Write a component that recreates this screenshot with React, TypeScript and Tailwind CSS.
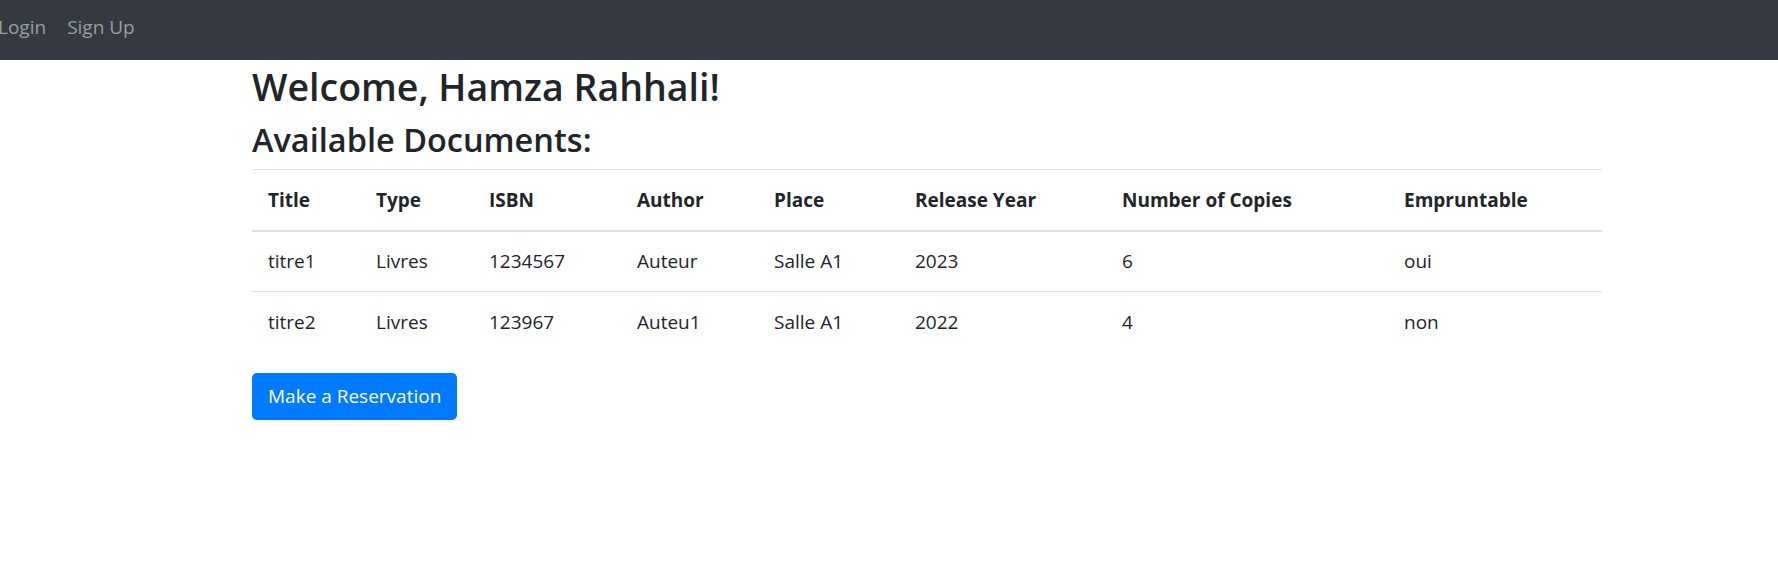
import React from 'react';

const docs = [
  { title: 'titre1', type: 'Livres', isbn: '1234567', author: 'Auteur', place: 'Salle A1', year: '2023', copies: '6', emp: 'oui' },
  { title: 'titre2', type: 'Livres', isbn: '123967', author: 'Auteu1', place: 'Salle A1', year: '2022', copies: '4', emp: 'non' },
];

const cols = ['w-[108px]', 'w-[113px]', 'w-[148px]', 'w-[137px]', 'w-[141px]', 'w-[207px]', 'w-[282px]', ''];

export default function App() {
  return (
    <div className="min-h-[572px] bg-white text-[#212529] font-['Open_Sans',sans-serif]">
      <nav className="h-[60px] bg-[#343a40] flex items-center">
        <div className="flex items-center gap-[21px] -ml-[2px] text-[19px] text-[#9a9da0] -mt-[6px]">
          <a href="#">Login</a>
          <a href="#">Sign Up</a>
        </div>
      </nav>

      <main className="ml-[252px] w-[1350px]">
        <h1 className="text-[37.5px] leading-[48px] font-semibold mt-[3px]">Welcome, Hamza Rahhali!</h1>
        <h2 className="text-[32.5px] leading-[40px] font-semibold mt-[9px]">Available Documents:</h2>

        <table className="w-full mt-[9px] text-[19px] border-collapse">
          <thead>
            <tr className="border-t border-[#dee2e6] border-b-2">
              {['Title', 'Type', 'ISBN', 'Author', 'Place', 'Release Year', 'Number of Copies', 'Empruntable'].map((h, i) => (
                <th key={h} className={`${cols[i]} text-left font-bold px-[16px] h-[61px] leading-[30px]`}>{h}</th>
              ))}
            </tr>
          </thead>
          <tbody>
            {docs.map((d, r) => (
              <tr key={d.title} className={r === 0 ? 'border-b border-[#dee2e6]' : ''}>
                {[d.title, d.type, d.isbn, d.author, d.place, d.year, d.copies, d.emp].map((v, i) => (
                  <td key={i} className="px-[16px] h-[61px] leading-[30px]">{v}</td>
                ))}
              </tr>
            ))}
          </tbody>
        </table>

        <button className="mt-[20px] h-[47px] px-[16px] bg-[#007bff] text-white text-[19px] rounded-[5px]">
          Make a Reservation
        </button>
      </main>
    </div>
  );
}
